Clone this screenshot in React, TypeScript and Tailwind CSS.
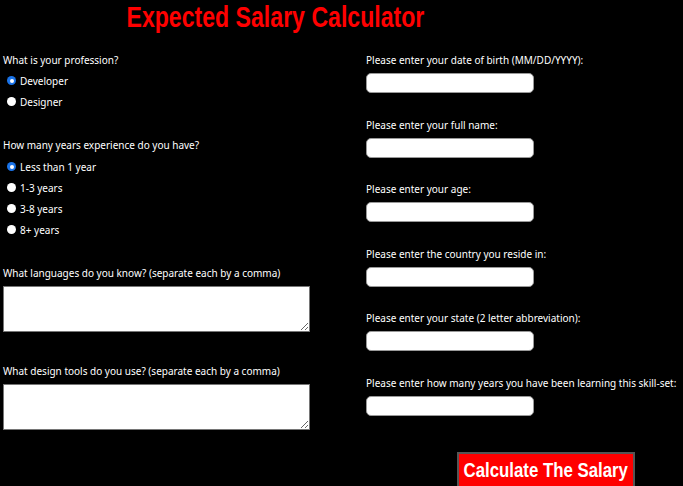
import React from 'react';

const body = { fontFamily: '"Noto Sans", "DejaVu Sans", sans-serif' };
const display = { fontFamily: '"Liberation Sans", Arial, sans-serif' };

const Radio: React.FC<{ label: string; checked?: boolean }> = ({ label, checked }) => (
  <div className="flex items-center h-[21px] pl-[4px] gap-[4px]">
    {checked ? (
      <span className="w-[9px] h-[9px] rounded-full bg-[#1a73e8] flex items-center justify-center">
        <span className="w-[4px] h-[4px] rounded-full bg-white"></span>
      </span>
    ) : (
      <span className="w-[9px] h-[9px] rounded-full bg-white"></span>
    )}
    <span className="text-[10px] leading-[12px] text-white">{label}</span>
  </div>
);

const rightFields = [
  'Please enter your date of birth (MM/DD/YYYY):',
  'Please enter your full name:',
  'Please enter your age:',
  'Please enter the country you reside in:',
  'Please enter your state (2 letter abbreviation):',
  'Please enter how many years you have been learning this skill-set:',
];

export default function App() {
  return (
    <div className="bg-black min-h-[486px] w-[683px] overflow-hidden text-white" style={body}>
      <div className="w-[550px] h-[30px] pt-[1px] flex justify-center">
        <h1
          className="inline-block whitespace-nowrap text-[#ff0000] font-bold text-[30px] leading-[32px] scale-x-[0.77]"
          style={display}
        >
          Expected Salary Calculator
        </h1>
      </div>

      <div className="flex pt-[24px]">
        {/* left column */}
        <div className="w-[366px] pl-[3px] flex flex-col">
          <p className="text-[10px] leading-[12px]">What is your profession?</p>
          <div className="mt-[4px]">
            <Radio label="Developer" checked />
            <Radio label="Designer" />
          </div>

          <p className="mt-[27px] text-[10px] leading-[12px]">How many years experience do you have?</p>
          <div className="mt-[5px]">
            <Radio label="Less than 1 year" checked />
            <Radio label="1-3 years" />
            <Radio label="3-8 years" />
            <Radio label="8+ years" />
          </div>

          <p className="mt-[27px] text-[10px] leading-[12px]">What languages do you know? (separate each by a comma)</p>
          <textarea className="mt-[7px] w-[307px] h-[46px] bg-white border border-[#767676] block"></textarea>

          <p className="mt-[33px] text-[10px] leading-[12px]">What design tools do you use? (separate each by a comma)</p>
          <textarea className="mt-[7px] w-[307px] h-[46px] bg-white border border-[#767676] block"></textarea>
        </div>

        {/* right column */}
        <div className="flex-1 flex flex-col gap-[25.5px]">
          {rightFields.map((f) => (
            <div key={f} className="flex flex-col">
              <p className="text-[10px] leading-[12px] whitespace-nowrap">{f}</p>
              <input type="text" className="mt-[7px] w-[168px] h-[20px] bg-white rounded-[5px] border border-[#999]" />
            </div>
          ))}
          <button className="mt-[11px] ml-[91px] w-[178px] h-[40px] bg-[#ff0000] border-2 border-[#555] flex justify-center pt-[1px] pb-[5px] overflow-hidden">
            <span
              className="inline-block whitespace-nowrap text-white font-bold text-[21px] leading-[30px] scale-x-[0.8]"
              style={display}
            >
              Calculate The Salary
            </span>
          </button>
        </div>
      </div>
    </div>
  );
}
